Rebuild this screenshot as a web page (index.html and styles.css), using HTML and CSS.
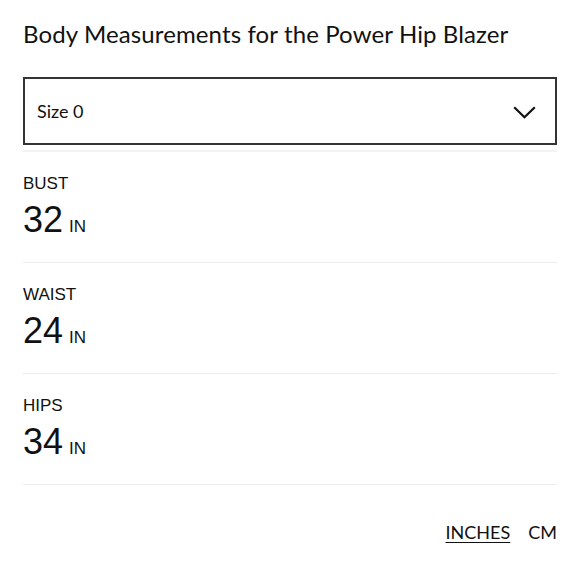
FILE: index.html
```html
<!DOCTYPE html>
<html>
<head>
<meta charset="utf-8">
<link rel="stylesheet" href="styles.css">
</head>
<body>
<div class="page">
  <h1 class="title">Body Measurements for the Power Hip Blazer</h1>
  <div class="select">
    <span class="select-label">Size 0</span>
    <svg class="chev" width="23" height="13" viewBox="0 0 23 13"><path d="M1.2 1.2 L11.5 11.3 L21.8 1.2" fill="none" stroke="#111" stroke-width="2.2"/></svg>
  </div>
  <div class="sep"></div>
  <div class="row">
    <div class="label">BUST</div>
    <div class="value"><span class="num">32</span><span class="unit">IN</span></div>
  </div>
  <div class="row">
    <div class="label">WAIST</div>
    <div class="value"><span class="num">24</span><span class="unit">IN</span></div>
  </div>
  <div class="row">
    <div class="label">HIPS</div>
    <div class="value"><span class="num">34</span><span class="unit">IN</span></div>
  </div>
  <div class="units">
    <span class="u active">INCHES</span>
    <span class="u">CM</span>
  </div>
</div>
</body>
</html>
```
FILE: styles.css
```css
html, body { margin: 0; padding: 0; background: #fff; }
body { color: #111; font-family: "Lato", "Liberation Sans", sans-serif; }
.page { padding: 0 23px; }
.title {
  margin: 0;
  padding-top: 19px;
  font-size: 24px;
  font-weight: 400;
  line-height: 29px;
  letter-spacing: 0.12px;
}
.select {
  margin-top: 29px;
  height: 64px;
  border: 2px solid #333;
  display: flex;
  align-items: center;
  justify-content: space-between;
  padding: 0 19px 0 12px;
}
.select-label { font-size: 18px; }
.chev { display: block; margin-top: 2px; }
.sep { height: 2px; background: #f3f3f3; margin-top: 5px; }
.row {
  border-bottom: 1px solid #ececec;
  height: 111px;
  box-sizing: border-box;
  padding-top: 22px;
}
.label { font-size: 17px; line-height: 20px; font-family: "Liberation Sans", sans-serif; }
.value { margin-top: 5px; display: flex; align-items: baseline; font-family: "Liberation Sans", sans-serif; }
.num { font-size: 36px; line-height: 42px; }
.unit { font-size: 17px; margin-left: 6px; }
.units {
  display: flex;
  justify-content: flex-end;
  gap: 18px;
  padding-top: 36px;
  font-size: 18px;
}
.u.active { text-decoration: underline; text-underline-offset: 3px; }
```
